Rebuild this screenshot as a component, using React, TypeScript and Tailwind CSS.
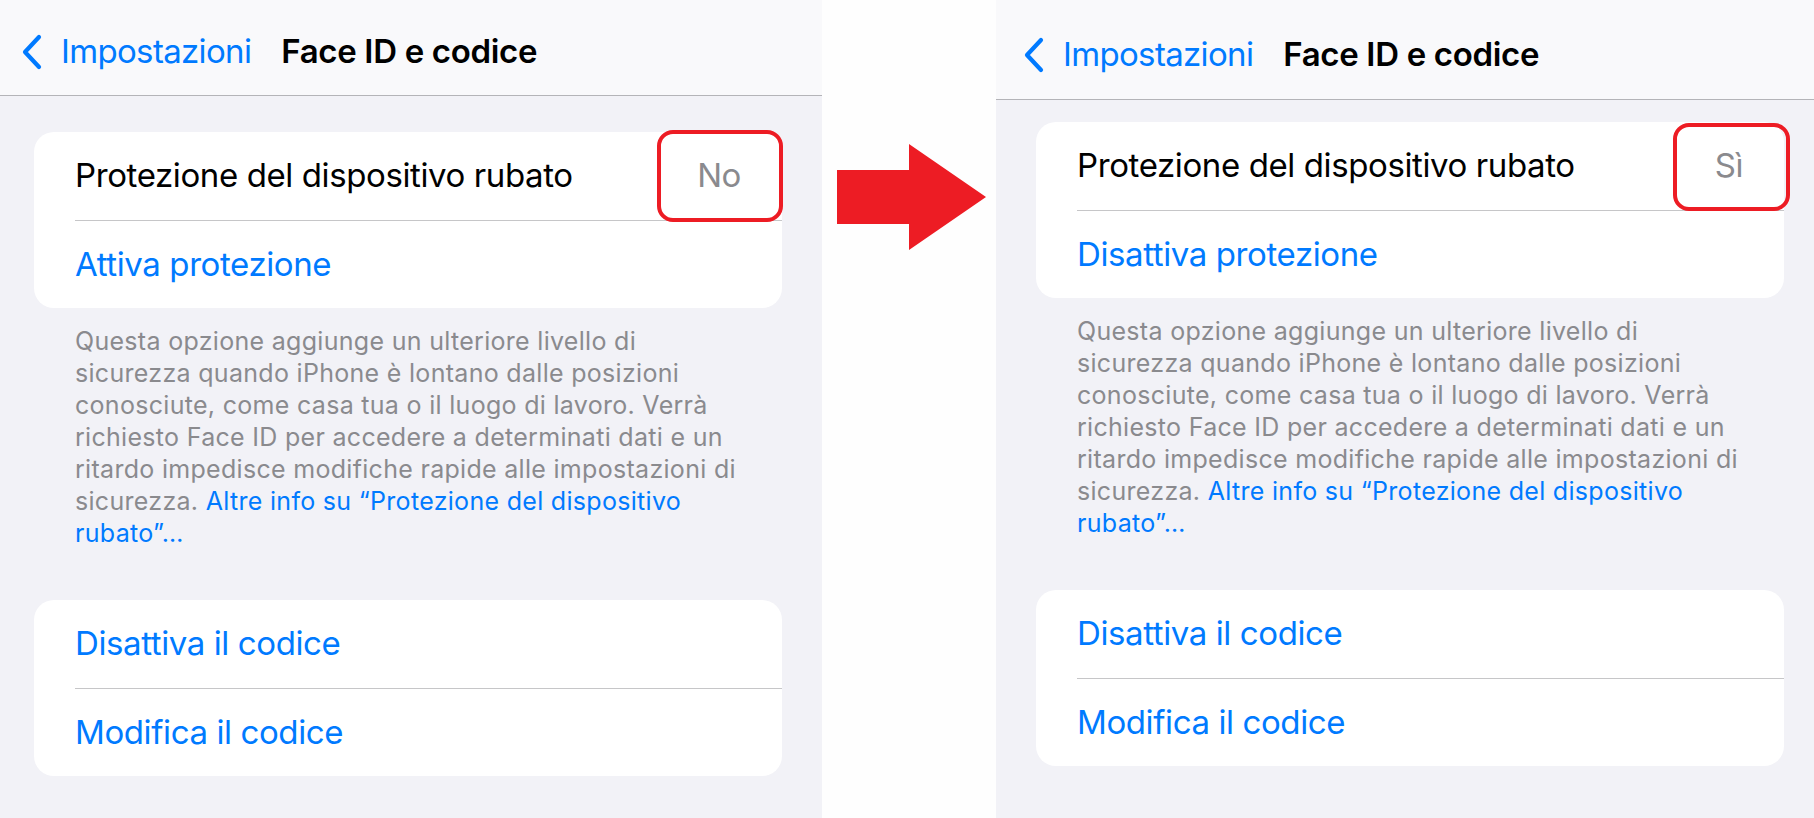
import React from 'react';

const FONT = { fontFamily: 'Inter, "Noto Sans", "Liberation Sans", sans-serif' };

interface PanelProps {
  value: string;
  action: string;
  right?: boolean;
}

const Chevron = () => (
  <svg width="22" height="36" viewBox="0 0 22 36" fill="none">
    <polyline
      points="18,3 4,18 18,33"
      stroke="#007aff"
      strokeWidth="4.2"
      strokeLinecap="round"
      strokeLinejoin="round"
    />
  </svg>
);

const Row = ({ children, className = '' }: { children: React.ReactNode; className?: string }) => (
  <div className={`flex items-center pl-[41px] pr-[41px] text-[33px] tracking-[-0.012em] ${className}`}>
    {children}
  </div>
);

const Panel: React.FC<PanelProps> = ({ value, action, right }) => {
  return (
    <div
      className={`flex flex-col h-[818px] bg-[#f2f2f7] ${right ? 'w-[818px]' : 'w-[822px]'}`}
    >
      {/* Nav bar */}
      <div
        className={`flex items-center bg-[#f9f9fb] border-b border-[#b4b4b8] ${
          right ? 'h-[100px] pt-[10px] pl-[27px]' : 'h-[96px] pt-[8px] pl-[21px]'
        }`}
      >
        <Chevron />
        <span className="ml-[18px] text-[33px] tracking-[-0.02em] text-[#007aff]">Impostazioni</span>
        <span className="ml-[30px] text-[33px] tracking-[-0.01em] font-semibold text-black">
          Face ID e codice
        </span>
      </div>

      <div className={right ? 'pl-[40px] pr-[30px]' : 'pl-[34px] pr-[40px]'}>
        {/* Card 1 */}
        <div className={`relative bg-white rounded-[20px] ${right ? 'mt-[22px]' : 'mt-[36px]'}`}>
          <Row className="h-[88px] justify-between">
            <span className="text-black">Protezione del dispositivo rubato</span>
            <span className="text-[#8a8a8e]">{value}</span>
          </Row>
          <div className="ml-[41px] h-px bg-[#c6c6c8]" />
          <Row className="h-[87px]">
            <span className="text-[#007aff]">{action}</span>
          </Row>

          {/* red highlight */}
          <div
            className={`absolute border-[4px] border-[#ed1c24] rounded-[16px] ${
              right ? 'top-[1px] -right-[6px] w-[117px] h-[88px]' : '-top-[2px] -right-[1px] w-[126px] h-[92px]'
            }`}
          />
        </div>

        {/* Footer */}
        <p className="pt-[17px] pl-[41px] pr-[10px] text-[25px] leading-[32px] tracking-[0.012em] text-[#8a8a8e] whitespace-nowrap">
          Questa opzione aggiunge un ulteriore livello di
          <br />
          sicurezza quando iPhone è lontano dalle posizioni
          <br />
          conosciute, come casa tua o il luogo di lavoro. Verrà
          <br />
          richiesto Face ID per accedere a determinati dati e un
          <br />
          ritardo impedisce modifiche rapide alle impostazioni di
          <br />
          sicurezza. <span className="text-[#007aff]">Altre info su “Protezione del dispositivo</span>
          <br />
          <span className="text-[#007aff]">rubato”…</span>
        </p>

        {/* Card 2 */}
        <div className="mt-[51px] bg-white rounded-[20px]">
          <Row className="h-[88px]">
            <span className="text-[#007aff]">Disattiva il codice</span>
          </Row>
          <div className="ml-[41px] h-px bg-[#c6c6c8]" />
          <Row className="h-[87px]">
            <span className="text-[#007aff]">Modifica il codice</span>
          </Row>
        </div>
      </div>
    </div>
  );
};

export default function App() {
  return (
    <div className="flex w-[1814px] h-[818px] overflow-hidden bg-white" style={FONT}>
      <Panel value="No" action="Attiva protezione" />
      <div className="w-[174px] h-[818px] bg-[#fefefe] pt-[144px] pl-[15px]">
        <svg width="149" height="106" viewBox="0 0 149 106">
          <polygon points="0,26 72,26 72,0 149,53 72,106 72,80 0,80" fill="#ed1c24" />
        </svg>
      </div>
      <Panel value="Sì" action="Disattiva protezione" right />
    </div>
  );
}
